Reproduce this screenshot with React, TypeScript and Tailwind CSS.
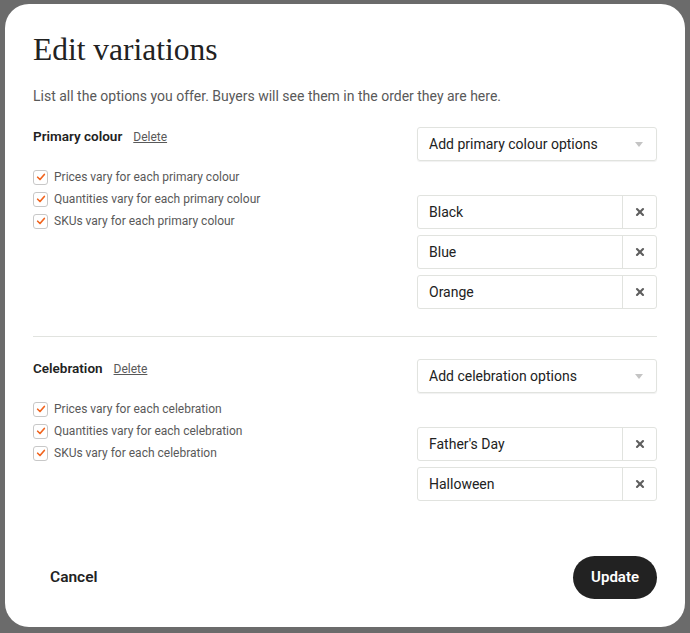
import { X } from "lucide-react"

type Section = {
    title: string
    placeholder: string
    noun: string
    options: string[]
}

const sections: Section[] = [
    { title: "Primary colour", placeholder: "Add primary colour options", noun: "primary colour", options: ["Black", "Blue", "Orange"] },
    { title: "Celebration", placeholder: "Add celebration options", noun: "celebration", options: ["Father's Day", "Halloween"] },
]

function Check({ label }: { label: string }) {
    return (
        <label className="flex items-center gap-[6px] h-[22px] text-[12px] text-[#595959]">
            <span className="w-[15px] h-[15px] rounded-[3px] border border-[#c8c8c8] bg-white flex items-center justify-center">
                <svg viewBox="0 0 12 12" className="w-[10px] h-[10px]">
                    <path d="M2 6.3 L4.8 9 L10 3" fill="none" stroke="#f1641e" strokeWidth="2" strokeLinecap="round" strokeLinejoin="round" />
                </svg>
            </span>
            {label}
        </label>
    )
}

function VariationSection({ s }: { s: Section }) {
    return (
        <div className="flex justify-between">
            <div>
                <div className="flex items-baseline gap-[11px] -mt-[1px]">
                    <span className="text-[13.5px] font-semibold text-[#222]">{s.title}</span>
                    <button className="text-[12px] text-[#595959] underline">Delete</button>
                </div>
                <div className="mt-[20px] flex flex-col">
                    <Check label={`Prices vary for each ${s.noun}`} />
                    <Check label={`Quantities vary for each ${s.noun}`} />
                    <Check label={`SKUs vary for each ${s.noun}`} />
                </div>
            </div>
            <div className="w-[240px]">
                <div className="h-[34px] border border-[#e1e3df] rounded-[3px] flex items-center justify-between pl-[11px] pr-[13px] shadow-[0_1px_1px_rgba(0,0,0,0.06)]">
                    <span className="text-[14px] text-[#222]">{s.placeholder}</span>
                    <span className="w-0 h-0 border-l-[4px] border-r-[4px] border-t-[5px] border-l-transparent border-r-transparent border-t-[#c4c4c4]" />
                </div>
                <div className="mt-[34px] flex flex-col gap-[6px]">
                    {s.options.map((o) => (
                        <div key={o} className="h-[34px] border border-[#e1e3df] rounded-[3px] flex">
                            <span className="flex-1 flex items-center pl-[11px] text-[14px] text-[#222]">{o}</span>
                            <span className="w-[34px] border-l border-[#e1e3df] flex items-center justify-center">
                                <X className="w-[12px] h-[12px] text-[#5e5e5e]" strokeWidth={4.2} />
                            </span>
                        </div>
                    ))}
                </div>
            </div>
        </div>
    )
}

export default function App() {
    return (
        <div className="w-[690px] h-[633px] bg-[#6b6b6b] relative overflow-hidden" style={{ fontFamily: "Roboto, 'Liberation Sans', sans-serif" }}>
            <div className="absolute left-[5px] top-[4px] w-[680px] h-[623px] bg-white rounded-[24px] px-[28px] pt-[26px] flex flex-col">
                <h1 className="text-[31.5px] leading-[40px] text-[#222] font-normal" style={{ fontFamily: "'Liberation Serif', serif" }}>Edit variations</h1>
                <p className="mt-[16px] text-[14px] text-[#595959]">List all the options you offer. Buyers will see them in the order they are here.</p>
                <div className="mt-[20px]">
                    <VariationSection s={sections[0]} />
                </div>
                <hr className="mt-[27px] border-t border-[#e1e3df]" />
                <div className="mt-[22px]">
                    <VariationSection s={sections[1]} />
                </div>
                <div className="mt-auto mb-[28px] flex items-center justify-between">
                    <button className="ml-[17px] text-[15.5px] font-semibold text-[#222]">Cancel</button>
                    <button className="h-[43px] px-[18px] rounded-full bg-[#222] text-white text-[15px] font-semibold">Update</button>
                </div>
            </div>
        </div>
    )
}
